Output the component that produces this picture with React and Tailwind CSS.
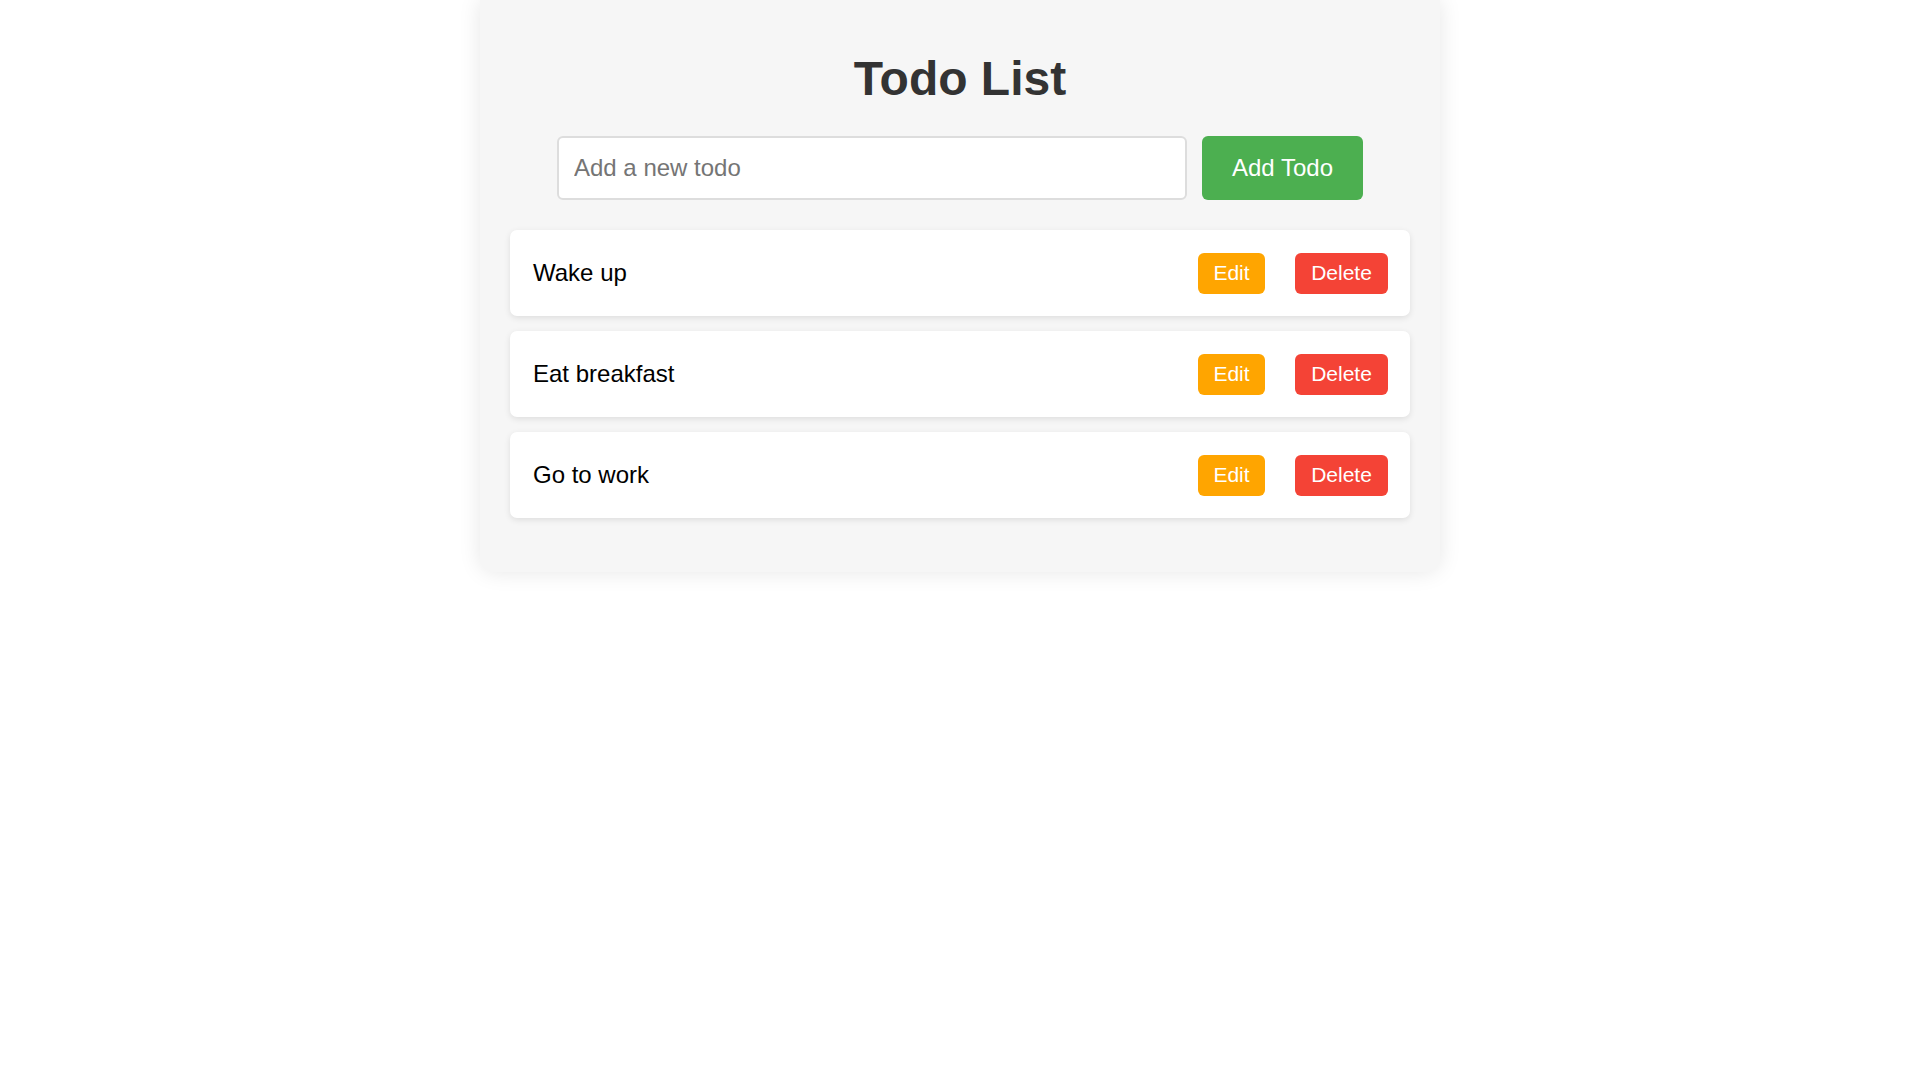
import React from "react";

const todos = ["Wake up", "Eat breakfast", "Go to work"];

export default function App() {
  return (
    <div
      className="min-h-[1069px] w-full bg-white"
      style={{ fontFamily: '"Liberation Sans", Arial, sans-serif' }}
    >
      <div className="mx-auto w-[960px] rounded-b-[15px] bg-[#f6f6f6] px-[30px] pt-[51px] pb-[54px] shadow-[0_0_22px_rgba(0,0,0,0.1)]">
        <h1 className="text-center text-[48px] font-bold leading-[55px] text-[#333333]">
          Todo List
        </h1>
        <div className="mt-[30px] flex justify-center">
          <input
            type="text"
            placeholder="Add a new todo"
            className="h-[64px] w-[630px] rounded-[6px] border-2 border-[#dddddd] bg-white px-[15px] text-[24px] text-black outline-none placeholder:text-[#757575]"
          />
          <button className="ml-[15px] h-[64px] w-[161px] rounded-[6px] bg-[#4caf50] text-[24px] text-white">
            Add Todo
          </button>
        </div>
        <ul className="mt-[30px] flex flex-col gap-[15px]">
          {todos.map((t) => (
            <li
              key={t}
              className="flex h-[86px] items-center justify-between rounded-[7px] bg-white pl-[23px] pr-[22px] shadow-[0_2px_6px_rgba(0,0,0,0.1)]"
            >
              <span className="text-[24px] text-black">{t}</span>
              <div className="flex items-center gap-[30px]">
                <button className="flex h-[41px] w-[67px] items-center justify-center rounded-[6px] bg-[#ffa500] text-[21px] text-white">
                  Edit
                </button>
                <button className="flex h-[41px] w-[93px] items-center justify-center rounded-[6px] bg-[#f44336] text-[21px] text-white">
                  Delete
                </button>
              </div>
            </li>
          ))}
        </ul>
      </div>
    </div>
  );
}
